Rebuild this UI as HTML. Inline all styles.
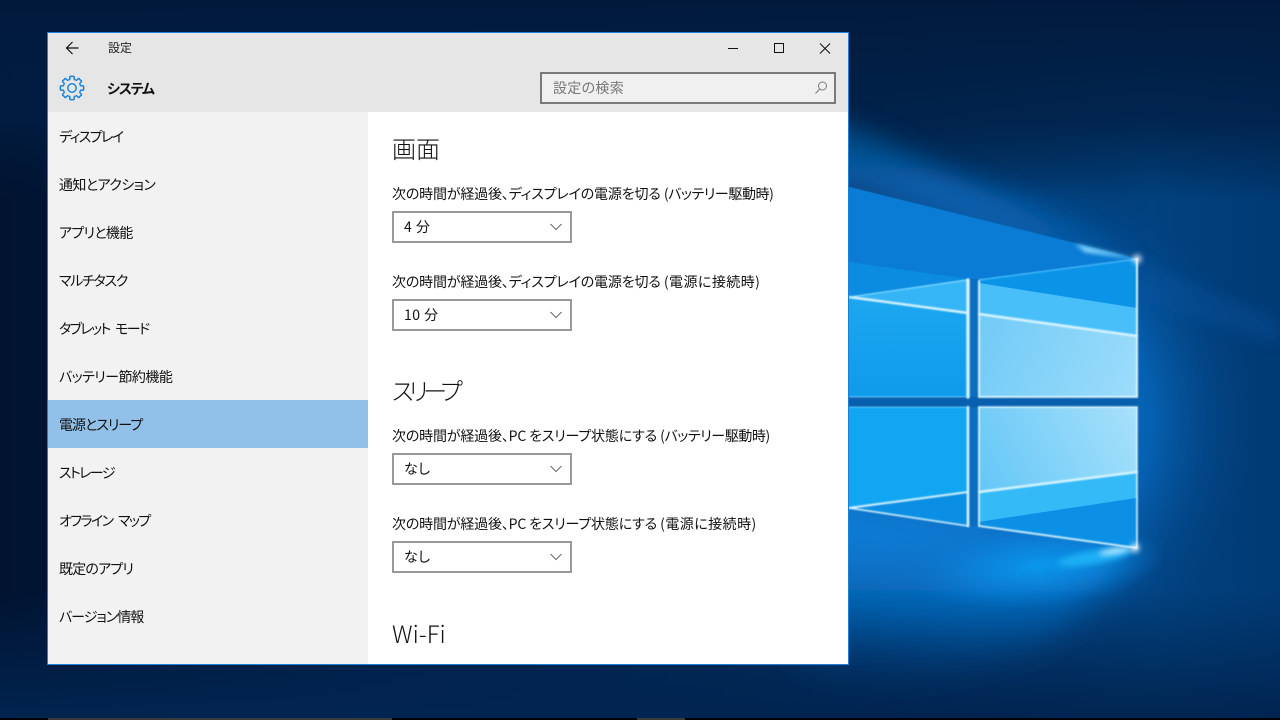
<!DOCTYPE html>
<html lang="ja"><head><meta charset="utf-8"><title>設定</title>
<style>
html,body{margin:0;padding:0;width:1280px;height:720px;overflow:hidden;background:#011a3d}
body{position:relative;font-family:"Liberation Sans","Noto Sans CJK JP",sans-serif;color:#000}
#bg{position:absolute;left:0;top:0}
#win{position:absolute;left:47px;top:32px;width:800px;height:631px;border:1px solid #1a80da;background:#fff;overflow:hidden}
.t{position:absolute;white-space:nowrap;font-size:14px;line-height:20px;font-feature-settings:"palt";font-family:"Noto Sans CJK JP",sans-serif;color:#111}
.m{letter-spacing:-.17px}
.p{letter-spacing:.45px}
.q{letter-spacing:-.4px}
#head{position:absolute;left:0;top:0;width:800px;height:79px;background:#e6e6e6}
#side{position:absolute;left:0;top:79px;width:320px;height:552px;background:#f2f2f2}
#sel{position:absolute;left:0;top:288px;width:320px;height:48px;background:#91c1e8}
.dd{position:absolute;left:344px;width:176px;height:28px;border:2px solid #999;background:#fff}
.dd svg{position:absolute;left:156px;top:10px}
.dd span{position:absolute;left:10px;top:4px;font-size:14px;line-height:20px;white-space:nowrap;color:#111;font-family:"Noto Sans CJK JP",sans-serif;font-feature-settings:"palt";letter-spacing:.5px}
#search{position:absolute;left:492px;top:39px;width:292px;height:28px;border:2px solid #7a7a7a;background:#f0f0f0}
.h{position:absolute;white-space:nowrap;font-size:24px;line-height:30px;color:#111;font-weight:300;font-family:"Noto Sans CJK JP",sans-serif;font-feature-settings:"palt"}
.bar{position:absolute;top:718px;height:2px;background:#3a3a3a}
#blk{position:absolute;left:0;top:718px;width:1280px;height:2px;background:#000}
</style></head><body>
<svg id="bg" width="1280" height="720" viewBox="0 0 1280 720">
<defs>
<linearGradient id="base" x1="0" y1="0" x2="1" y2="0"><stop offset="0" stop-color="#011330"/><stop offset=".56" stop-color="#012a58"/><stop offset=".72" stop-color="#013568"/><stop offset=".9" stop-color="#01427f"/><stop offset="1" stop-color="#013a74"/></linearGradient>
<radialGradient id="g1" gradientUnits="userSpaceOnUse" cx="980" cy="420" r="285"><stop offset="0" stop-color="#0a78d8"/><stop offset=".6" stop-color="#0766ba" stop-opacity=".85"/><stop offset="1" stop-color="#023a78" stop-opacity="0"/></radialGradient>
<linearGradient id="top" x1="0" y1="0" x2="0" y2="1"><stop offset="0" stop-color="#011a3c"/><stop offset=".6" stop-color="#011e44" stop-opacity=".8"/><stop offset="1" stop-color="#011a3c" stop-opacity="0"/></linearGradient>
<linearGradient id="bot" x1="0" y1="0" x2="0" y2="1"><stop offset="0" stop-color="#012450" stop-opacity="0"/><stop offset="1" stop-color="#012450"/></linearGradient>
<linearGradient id="beam" gradientUnits="userSpaceOnUse" x1="849" y1="220" x2="1137" y2="259"><stop offset="0" stop-color="#0870c8"/><stop offset="1" stop-color="#0c96f0"/></linearGradient>
<linearGradient id="glow" gradientUnits="userSpaceOnUse" x1="849" y1="70" x2="849" y2="190"><stop offset="0" stop-color="#033a70" stop-opacity=".4"/><stop offset=".6" stop-color="#05528f"/><stop offset="1" stop-color="#0866b8"/></linearGradient>
<linearGradient id="under" gradientUnits="userSpaceOnUse" x1="0" y1="505" x2="0" y2="690"><stop offset="0" stop-color="#0a80da"/><stop offset=".3" stop-color="#0976cc"/><stop offset=".55" stop-color="#0766b6" stop-opacity=".8"/><stop offset=".8" stop-color="#044a90" stop-opacity=".4"/><stop offset="1" stop-color="#023f7e" stop-opacity="0"/></linearGradient>
<radialGradient id="pool" cx=".5" cy=".5" r=".5"><stop offset="0" stop-color="#0a98ee"/><stop offset=".5" stop-color="#0a8ce4" stop-opacity=".6"/><stop offset="1" stop-color="#0a80da" stop-opacity="0"/></radialGradient>
<linearGradient id="rt" gradientUnits="userSpaceOnUse" x1="979" y1="330" x2="1137" y2="390"><stop offset="0" stop-color="#72cbf7"/><stop offset="1" stop-color="#9cdcfb"/></linearGradient>
<linearGradient id="rb" gradientUnits="userSpaceOnUse" x1="979" y1="500" x2="1137" y2="420"><stop offset="0" stop-color="#62c6f7"/><stop offset="1" stop-color="#a6e0fb"/></linearGradient>
<linearGradient id="lt" x1="0" y1="0" x2="0" y2="1"><stop offset="0" stop-color="#1fa9f2"/><stop offset="1" stop-color="#0f9bea"/></linearGradient>
<filter id="b30" filterUnits="userSpaceOnUse" x="600" y="0" width="680" height="720"><feGaussianBlur stdDeviation="18"/></filter>
<filter id="b14" filterUnits="userSpaceOnUse" x="600" y="0" width="680" height="720"><feGaussianBlur stdDeviation="14"/></filter>
<filter id="b8" filterUnits="userSpaceOnUse" x="600" y="0" width="680" height="720"><feGaussianBlur stdDeviation="7"/></filter>
<filter id="b2" filterUnits="userSpaceOnUse" x="600" y="0" width="680" height="720"><feGaussianBlur stdDeviation="2"/></filter>
<filter id="b1" filterUnits="userSpaceOnUse" x="600" y="0" width="680" height="720"><feGaussianBlur stdDeviation=".7"/></filter>
<filter id="b3" filterUnits="userSpaceOnUse" x="600" y="0" width="680" height="720"><feGaussianBlur stdDeviation="3"/></filter>
</defs>
<rect width="1280" height="720" fill="url(#base)"/>
<rect x="640" y="0" width="640" height="720" fill="url(#g1)"/>
<rect width="1280" height="200" fill="url(#top)"/>
<rect y="590" width="1280" height="130" fill="url(#bot)"/>
<polygon points="1137,262 760,85 760,190 849,190" fill="url(#glow)" opacity=".9" filter="url(#b14)"/>
<polygon points="1137,259 790,172 790,300 1137,300" fill="url(#beam)" filter="url(#b1)"/>
<polygon points="1137,300 1137,259 1280,320 1280,345" fill="#0a5fb0" opacity=".25" filter="url(#b8)"/>
<polygon points="849,187 1137,259 1137,548 849,508" fill="#0a7cd6"/>
<polygon points="800,490 1137,548 1040,640 900,690 800,665" fill="url(#under)" filter="url(#b30)"/>
<ellipse cx="1040" cy="566" rx="125" ry="42" fill="url(#pool)" transform="rotate(-6 1040 566)"/>
<ellipse cx="1095" cy="557" rx="38" ry="7" fill="#1eaef6" transform="rotate(-10 1095 557)" filter="url(#b3)"/>
<ellipse cx="1115" cy="551" rx="16" ry="2.500" fill="#d8f4ff" transform="rotate(-10 1115 551)" filter="url(#b3)"/>
<polygon points="849,262 968,279 849,297" fill="#0c8ce0"/>
<polygon points="849,297 968,279 968,397 849,397" fill="url(#lt)"/>
<polygon points="849,297 968,279 968,313" fill="#36b5f6"/>
<polygon points="979,279 1137,259 1137,308 979,283" fill="#0b93e8"/>
<polygon points="979,283 1137,308 1137,336 979,314" fill="#48bff8"/>
<polygon points="979,314 1137,336 1137,397 979,397" fill="url(#rt)"/>
<polygon points="979,407 1137,407 1137,472 979,492" fill="url(#rb)"/>
<polygon points="979,492 1137,472 1137,498 979,522" fill="#35baf8"/>
<polygon points="979,522 1137,498 1137,548 979,526" fill="#0b90e6"/>
<polygon points="849,407 968,407 968,492 849,508" fill="#12a6f2"/>
<polygon points="849,508 968,492 968,526" fill="#0b8fe4"/>
<rect x="968" y="279" width="11" height="247" fill="#0a6dc0"/>
<rect x="849" y="397" width="288" height="10" fill="#075fae"/>
<g fill="none" stroke="#d8f4ff" stroke-linecap="round" filter="url(#b1)">
<path d="M849 297L968 313" stroke-width="2.400"/>
<path d="M849 297L968 280" stroke-width="1" stroke="#8adcff"/>
<path d="M968 280V397" stroke-width="3.400"/>
<path d="M979 281V397H1137" stroke-width="1.800" stroke="#e4f8ff" fill="none"/>
<path d="M979 314L1137 336" stroke-width="2.600"/>
<path d="M979 280L1137 259" stroke-width="1" stroke="#5cc8ff"/>
<path d="M1137 259V397" stroke-width="2"/>
<path d="M979 407H1137V548" stroke-width="1.600"/>
<path d="M979 407V526L1137 548" stroke-width="1.800"/>
<path d="M979 492L1137 472" stroke-width="2.400"/>
<path d="M968 407V526" stroke-width="2.600"/>
<path d="M849 508L968 526" stroke-width="1.600"/>
<path d="M849 508L968 492" stroke-width="2"/>
<path d="M849 397H968" stroke-width=".8" stroke="#8adcff"/>
<path d="M849 407H968" stroke-width=".8" stroke="#8adcff"/>
</g>
<polygon points="1137,259 1075,244 1085,252" fill="#8fdcff" filter="url(#b2)"/>
<circle cx="1137" cy="259" r="4" fill="#fff" filter="url(#b3)"/>
<circle cx="1135" cy="548" r="4" fill="#fff" filter="url(#b3)"/>
</svg>
<div id="blk"></div>
<div class="bar" style="left:48px;width:344px"></div>
<div class="bar" style="left:637px;width:48px"></div>

<div id="win">
 <div id="head">
  <svg style="position:absolute;left:17px;top:8px" width="14" height="14" viewBox="0 0 14 14" fill="none" stroke="#111" stroke-width="1.2"><path d="M7.500 1L1.500 7L7.500 13M1.500 7H13.500"/></svg>
  <div class="t" style="left:60px;top:5px;font-size:12px;color:#222">設定</div>
  <svg style="position:absolute;left:680px;top:10px" width="104" height="12" viewBox="0 0 104 12" fill="none" stroke="#111" stroke-width="1"><path d="M0 5.500H10"/><rect x="46.500" y=".5" width="9" height="9"/><path d="M92 .5L102 10.500M102 .5L92 10.500"/></svg>
  <svg style="position:absolute;left:11px;top:42px" width="26" height="26" viewBox="-13 -13 26 26" fill="none" stroke="#1a84dc" stroke-width="1.5" stroke-linejoin="round">
   <defs><path id="s" d="M-3.33-8.04L-2.300-8.600L-2-11.600L2-11.600L2.300-8.600L3.33-8.04"/></defs>
   <use href="#s"/><use href="#s" transform="rotate(45)"/><use href="#s" transform="rotate(90)"/><use href="#s" transform="rotate(135)"/><use href="#s" transform="rotate(180)"/><use href="#s" transform="rotate(225)"/><use href="#s" transform="rotate(270)"/><use href="#s" transform="rotate(315)"/>
   <circle r="4.200"/>
  </svg>
  <div class="t" style="left:59px;top:46px;font-weight:700;color:#111;letter-spacing:-1.2px">システム</div>
  <div id="search">
   <div class="t" style="left:11px;top:4px;color:#777;letter-spacing:.3px">設定の検索</div>
   <svg style="position:absolute;left:272px;top:7px" width="14" height="14" viewBox="0 0 14 14" fill="none" stroke="#7a7a7a" stroke-width="1"><circle cx="8.500" cy="5" r="4"/><path d="M5.700 8L1.500 12.500"/></svg>
  </div>
 </div>
 <div id="side">
  <div id="sel"></div>
  <div class="t" style="left:11px;top:15px;letter-spacing:-1.6px">ディスプレイ</div>
  <div class="t" style="left:11px;top:63px;letter-spacing:-.6px">通知とアクション</div>
  <div class="t" style="left:11px;top:111px;letter-spacing:-.7px">アプリと機能</div>
  <div class="t" style="left:11px;top:159px;letter-spacing:-1.3px">マルチタスク</div>
  <div class="t" style="left:11px;top:207px;letter-spacing:-1.6px;word-spacing:4px">タブレット モード</div>
  <div class="t" style="left:11px;top:255px;letter-spacing:-.55px">バッテリー節約機能</div>
  <div class="t" style="left:11px;top:303px;letter-spacing:-1px">電源とスリープ</div>
  <div class="t" style="left:11px;top:351px;letter-spacing:-1.6px">ストレージ</div>
  <div class="t" style="left:11px;top:399px;letter-spacing:-1.6px;word-spacing:4px">オフライン マップ</div>
  <div class="t" style="left:11px;top:447px;letter-spacing:-.8px">既定のアプリ</div>
  <div class="t" style="left:11px;top:495px;letter-spacing:-1px">バージョン情報</div>
 </div>
 <div class="h" style="left:344px;top:100px">画面</div>
 <div class="t" style="left:344px;top:151px"><span class="m">次の時間が経過後、ディスプレイの電源を切る</span> <span class="q">(バッテリー駆動時)</span></div>
 <div class="dd" style="top:178px"><span>4 分</span><svg width="12" height="8" viewBox="0 0 12 8" fill="none" stroke="#666" stroke-width="1"><path d="M.5 1L6 6.500L11.500 1"/></svg></div>
 <div class="t" style="left:344px;top:239px"><span class="m">次の時間が経過後、ディスプレイの電源を切る</span> <span class="p">(電源に接続時)</span></div>
 <div class="dd" style="top:266px"><span>10 分</span><svg width="12" height="8" viewBox="0 0 12 8" fill="none" stroke="#666" stroke-width="1"><path d="M.5 1L6 6.500L11.500 1"/></svg></div>
 <div class="h" style="left:344px;top:342px;letter-spacing:-5px">スリープ</div>
 <div class="t" style="left:344px;top:393px"><span class="m">次の時間が経過後、PC をスリープ状態にする</span> <span class="q">(バッテリー駆動時)</span></div>
 <div class="dd" style="top:420px"><span>なし</span><svg width="12" height="8" viewBox="0 0 12 8" fill="none" stroke="#666" stroke-width="1"><path d="M.5 1L6 6.500L11.500 1"/></svg></div>
 <div class="t" style="left:344px;top:481px"><span class="m">次の時間が経過後、PC をスリープ状態にする</span> <span class="p">(電源に接続時)</span></div>
 <div class="dd" style="top:508px"><span>なし</span><svg width="12" height="8" viewBox="0 0 12 8" fill="none" stroke="#666" stroke-width="1"><path d="M.5 1L6 6.500L11.500 1"/></svg></div>
 <div class="h" style="left:344px;top:585px">Wi-Fi</div>
</div>
</body></html>
